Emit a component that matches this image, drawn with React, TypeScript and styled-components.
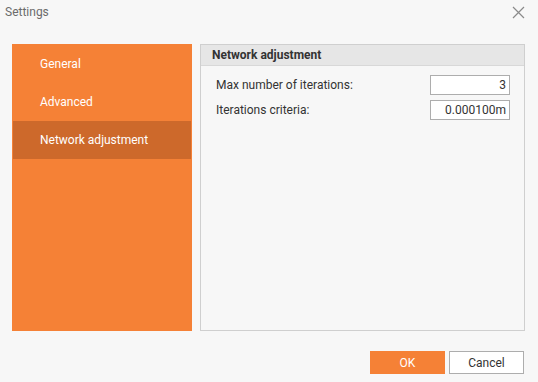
import React from 'react'
import styled, { createGlobalStyle } from 'styled-components'

const GlobalStyle = createGlobalStyle`
  html, body {
    margin: 0;
    padding: 0;
    background: #f7f7f7;
  }
  * {
    box-sizing: border-box;
  }
`

const Dialog = styled.div`
  width: 538px;
  height: 382px;
  background: #f7f7f7;
  font-family: Roboto, 'Liberation Sans', sans-serif;
  font-size: 12px;
  color: #333;
  display: flex;
  flex-direction: column;
`

const TitleBar = styled.div`
  height: 24px;
  display: flex;
  align-items: center;
  justify-content: space-between;
  padding: 0 13px 0 5px;
`

const Title = styled.span`
  color: #6b6b6b;
  font-size: 12px;
`

const CloseButton = styled.button`
  border: none;
  background: transparent;
  padding: 0;
  width: 13px;
  height: 13px;
  display: flex;
  cursor: pointer;
`

const Body = styled.div`
  flex: 1;
  display: flex;
  gap: 8px;
  padding: 20px 13px 0 12px;
`

const Sidebar = styled.div`
  width: 180px;
  height: 287px;
  background: #f58136;
  padding: 1px;
  display: flex;
  flex-direction: column;
`

const NavItem = styled.div<{ $active?: boolean }>`
  height: 38px;
  display: flex;
  align-items: center;
  padding-left: 27px;
  color: #fff;
  background: ${({ $active }) => ($active ? '#cd692b' : 'transparent')};
  cursor: pointer;
`

const Panel = styled.div`
  flex: 1;
  height: 287px;
  border: 1px solid #cfcfcf;
  background: #f7f7f7;
  display: flex;
  flex-direction: column;
`

const PanelHeader = styled.div`
  height: 21px;
  background: #e6e6e6;
  border-bottom: 1px solid #d8d8d8;
  display: flex;
  align-items: center;
  padding-left: 11px;
  font-weight: 700;
  color: #333;
`

const Fields = styled.div`
  padding: 9px 14px 0 15px;
  display: flex;
  flex-direction: column;
  gap: 5px;
`

const FieldRow = styled.div`
  display: flex;
  align-items: center;
  justify-content: space-between;
`

const Label = styled.label`
  color: #333;
`

const Input = styled.input`
  width: 80px;
  height: 20px;
  border: 1px solid #adadad;
  background: #fff;
  text-align: right;
  padding: 0 3px;
  font-family: inherit;
  font-size: 12px;
  color: #333;
  outline: none;
`

const Footer = styled.div`
  height: 51px;
  display: flex;
  justify-content: flex-end;
  align-items: flex-start;
  gap: 4px;
  padding: 20px 14px 0 0;
`

const Button = styled.button<{ $primary?: boolean }>`
  width: 75px;
  height: 23px;
  font-family: inherit;
  font-size: 12px;
  border: 1px solid ${({ $primary }) => ($primary ? '#f58136' : '#adadad')};
  background: ${({ $primary }) => ($primary ? '#f58136' : '#fff')};
  color: ${({ $primary }) => ($primary ? '#fff' : '#333')};
  cursor: pointer;
  padding: 0;
`

const navItems = ['General', 'Advanced', 'Network adjustment']

export default function App() {
  return (
    <Dialog>
      <GlobalStyle />
      <TitleBar>
        <Title>Settings</Title>
        <CloseButton aria-label="Close">
          <svg width="13" height="13" viewBox="0 0 13 13">
            <path d="M1 1 L12 12 M12 1 L1 12" stroke="#8a8a8a" strokeWidth="1.2" fill="none" />
          </svg>
        </CloseButton>
      </TitleBar>
      <Body>
        <Sidebar>
          {navItems.map((item) => (
            <NavItem key={item} $active={item === 'Network adjustment'}>
              {item}
            </NavItem>
          ))}
        </Sidebar>
        <Panel>
          <PanelHeader>Network adjustment</PanelHeader>
          <Fields>
            <FieldRow>
              <Label>Max number of iterations:</Label>
              <Input defaultValue="3" />
            </FieldRow>
            <FieldRow>
              <Label>Iterations criteria:</Label>
              <Input defaultValue="0.000100m" />
            </FieldRow>
          </Fields>
        </Panel>
      </Body>
      <Footer>
        <Button $primary>OK</Button>
        <Button>Cancel</Button>
      </Footer>
    </Dialog>
  )
}
